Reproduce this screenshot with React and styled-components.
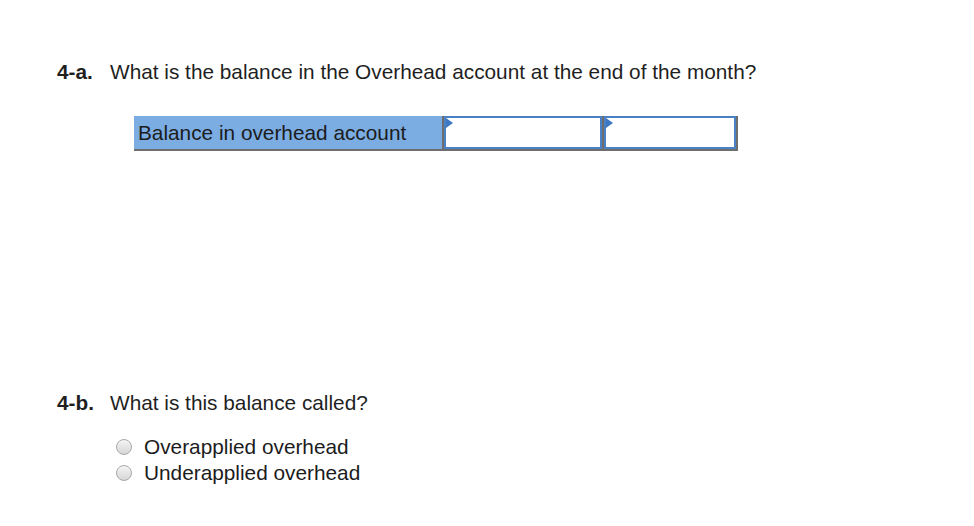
import React from 'react';
import styled, { createGlobalStyle } from 'styled-components';

const GlobalStyle = createGlobalStyle`
  html, body {
    margin: 0;
    padding: 0;
    background: #ffffff;
  }
  body {
    font-family: "Liberation Sans", Arial, Helvetica, sans-serif;
    color: #1f1f1f;
  }
`;

const Page = styled.div`
  width: 974px;
  height: 526px;
  padding: 60px 0 0 57px;
  box-sizing: border-box;
`;

const Question = styled.div`
  display: flex;
  align-items: baseline;
  font-size: 20.8px;
  line-height: 24px;
  margin-top: ${({ $top }) => $top || 0}px;
`;

const Number = styled.span`
  font-weight: bold;
  width: 53px;
  flex-shrink: 0;
`;

const AnswerTable = styled.div`
  display: flex;
  margin: 32px 0 0 77px;
  height: 33px;
  border-bottom: 2px solid #6e6e6e;
  border-right: 2px solid #6e6e6e;
  width: max-content;
`;

const LabelCell = styled.div`
  width: 304px;
  background: #7badE3;
  padding-left: 4px;
  font-size: 20.8px;
  line-height: 33px;
  color: #1c1c1c;
  border-right: 2px solid #6e6e6e;
`;

const InputCell = styled.div`
  position: relative;
  width: ${({ $w }) => $w}px;
  box-sizing: border-box;
  border: 2px solid #4a80c4;
  background: #ffffff;
  & + & {
    box-shadow: -2px 0 0 #6e6e6e;
    margin-left: 2px;
  }
`;

const Flag = styled.span`
  position: absolute;
  top: 0;
  left: 0;
  width: 0;
  height: 0;
  border-top: 5px solid transparent;
  border-bottom: 5px solid transparent;
  border-left: 7px solid #3f78c2;
`;

const Options = styled.div`
  display: flex;
  flex-direction: column;
  margin: 19px 0 0 59px;
`;

const Option = styled.label`
  display: flex;
  align-items: center;
  font-size: 20.8px;
  line-height: 26px;
  height: 26px;
  color: #1c1c1c;
`;

const Radio = styled.span`
  width: 16px;
  height: 16px;
  border-radius: 50%;
  box-sizing: border-box;
  border: 1px solid #a9a9a9;
  background: linear-gradient(#f4f4f4, #d6d6d6);
  margin-right: 12px;
  flex-shrink: 0;
`;

export default function App() {
  return (
    <Page>
      <GlobalStyle />
      <Question>
        <Number>4-a.</Number>
        <span>What is the balance in the Overhead account at the end of the month?</span>
      </Question>
      <AnswerTable>
        <LabelCell>Balance in overhead account</LabelCell>
        <InputCell $w={158}>
          <Flag />
        </InputCell>
        <InputCell $w={132}>
          <Flag />
        </InputCell>
      </AnswerTable>
      <Question $top={240}>
        <Number>4-b.</Number>
        <span>What is this balance called?</span>
      </Question>
      <Options>
        <Option>
          <Radio />
          Overapplied overhead
        </Option>
        <Option>
          <Radio />
          Underapplied overhead
        </Option>
      </Options>
    </Page>
  );
}
